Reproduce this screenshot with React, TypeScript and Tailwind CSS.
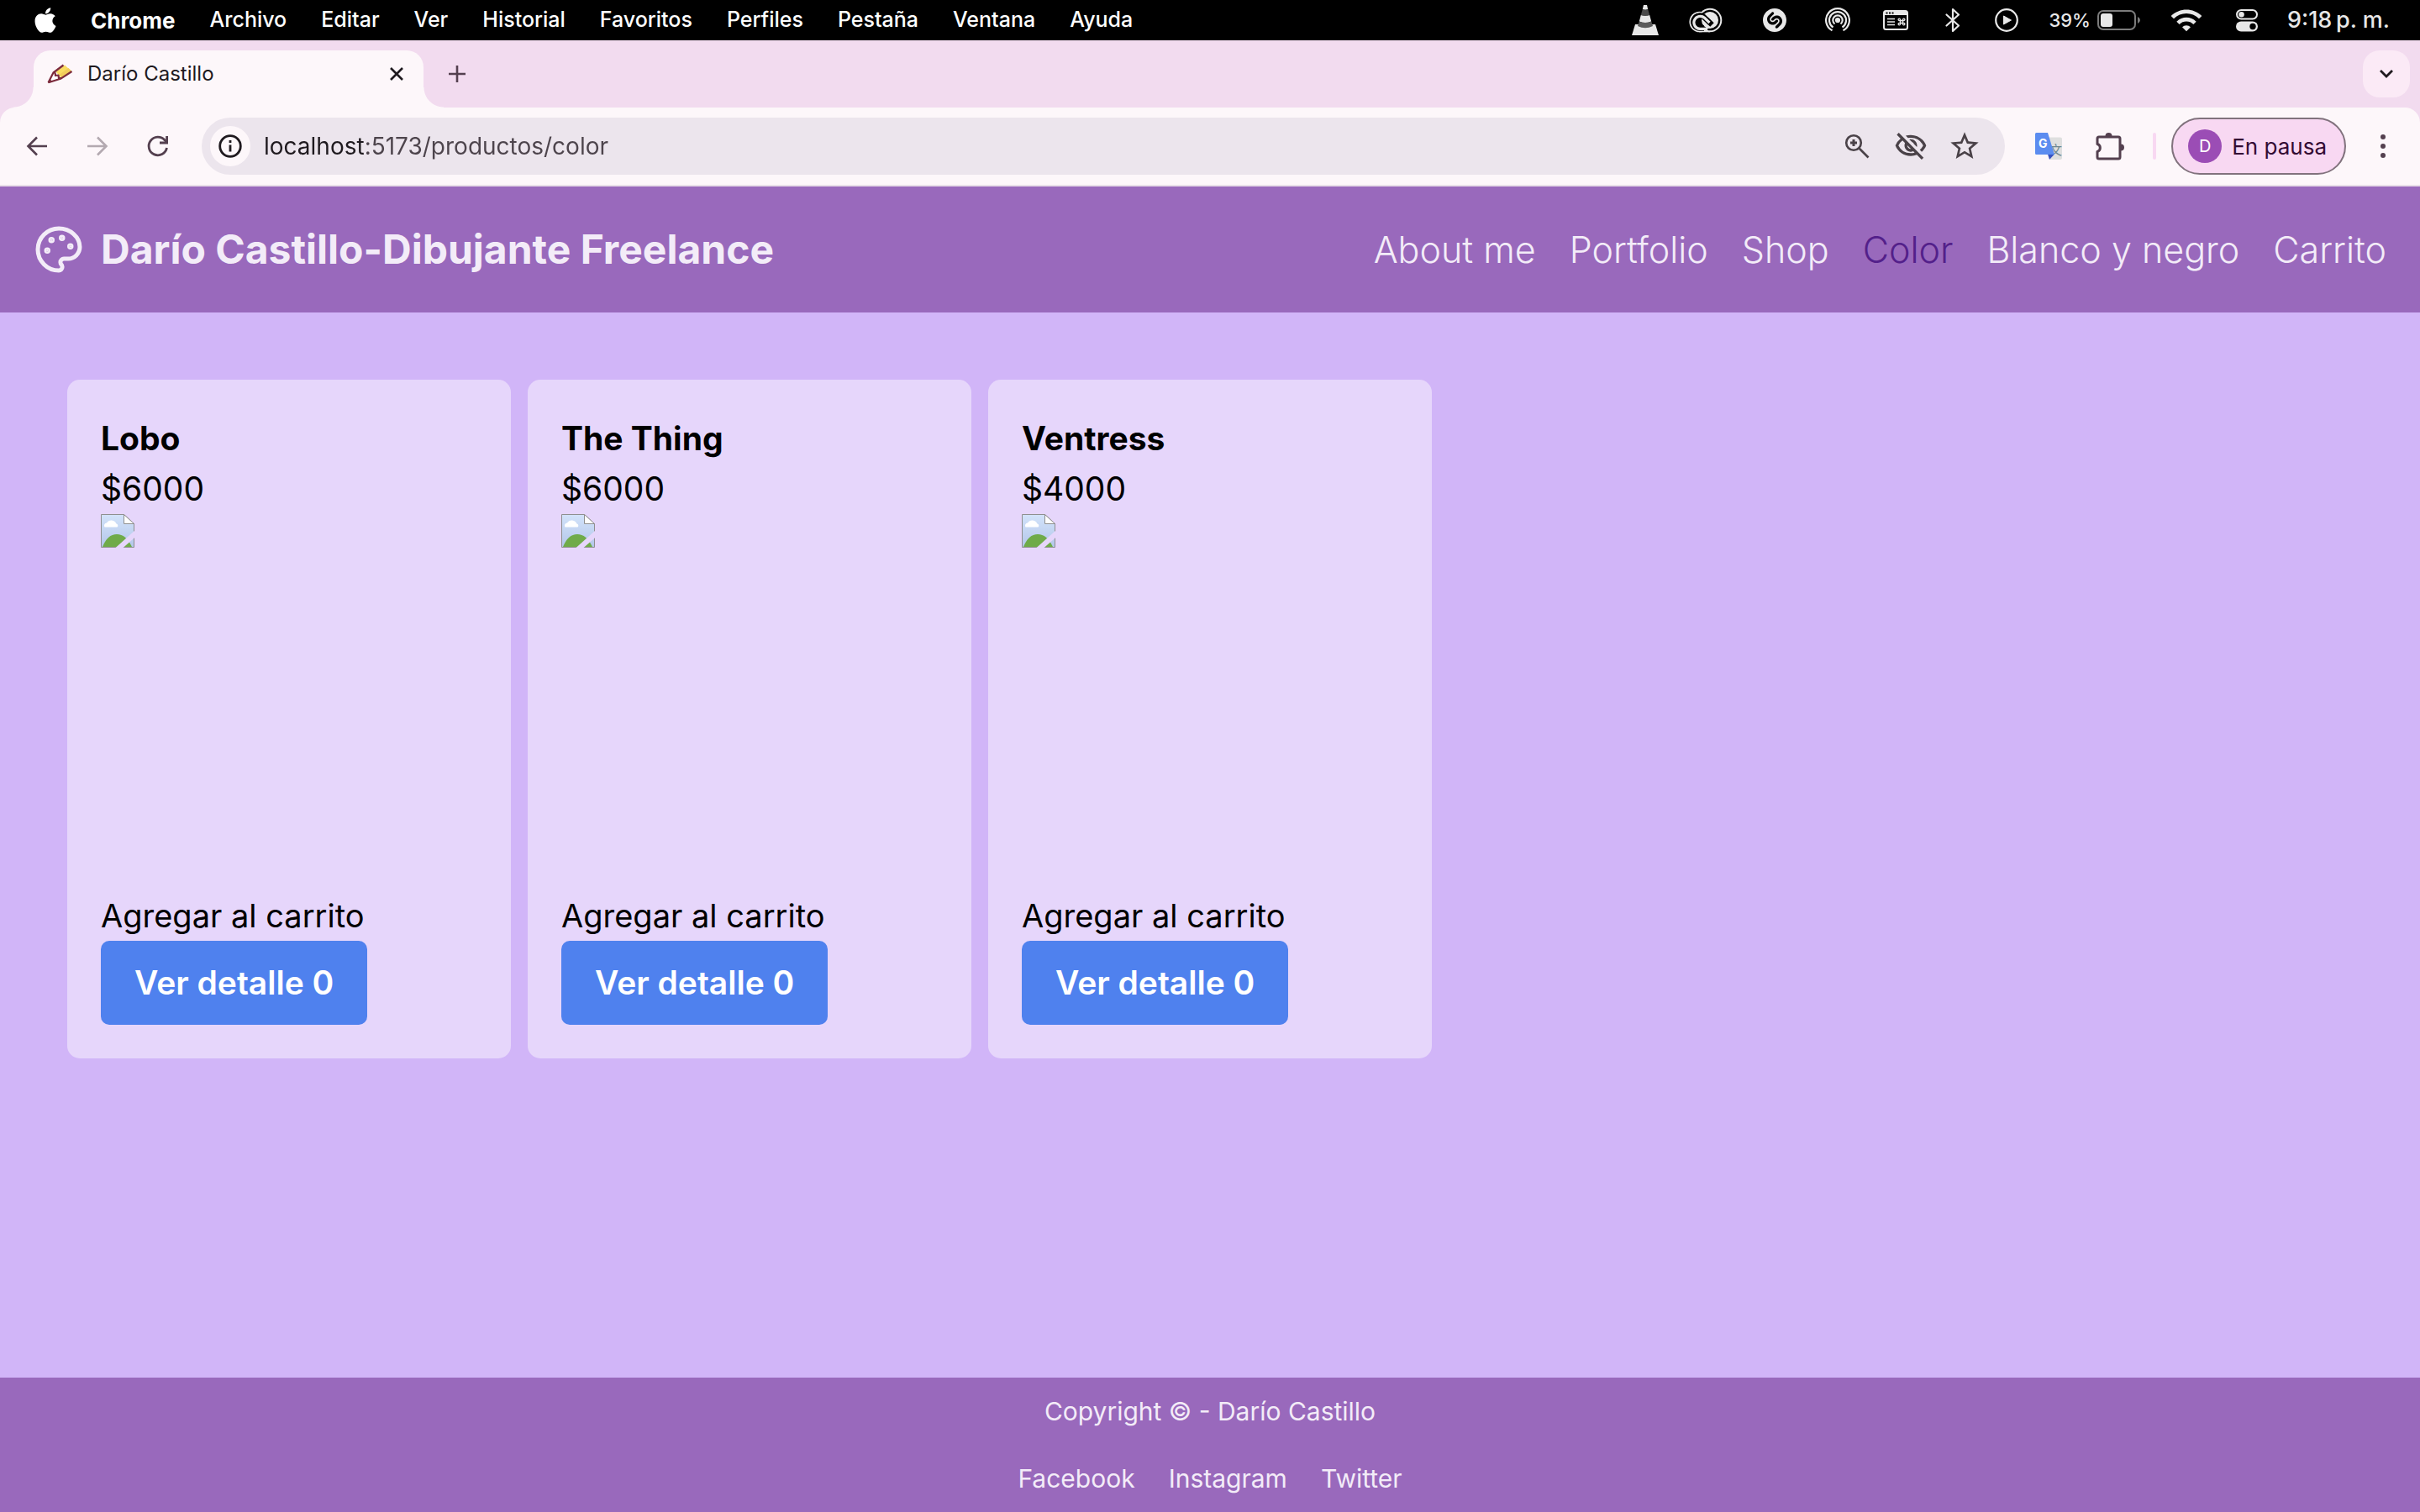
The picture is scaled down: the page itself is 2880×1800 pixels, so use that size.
import React from "react";
import { FaApple } from "react-icons/fa";
import { SiShazam } from "react-icons/si";
import { MdOutlineVisibilityOff, MdStarBorder, MdWifi } from "react-icons/md";

const menus = ["Archivo", "Editar", "Ver", "Historial", "Favoritos", "Perfiles", "Pestaña", "Ventana", "Ayuda"];

const navLinks = [
  { label: "About me", href: "#about" },
  { label: "Portfolio", href: "#portfolio" },
  { label: "Shop", href: "#shop" },
  { label: "Color", href: "#color", active: true },
  { label: "Blanco y negro", href: "#blanco-y-negro" },
  { label: "Carrito", href: "#carrito" },
];

const products = [
  { name: "Lobo", price: 6000 },
  { name: "The Thing", price: 6000 },
  { name: "Ventress", price: 4000 },
];

const socials = ["Facebook", "Instagram", "Twitter"];

function ConeIcon() {
  return (
    <svg viewBox="0 0 32 36" className="h-9 w-10" aria-hidden="true">
      <path d="M4 23h24l4 13H0z" fill="#e8e8e8" />
      <path d="M14 0h4l1.200 5q-3.200 1.500-6.400 0z" fill="#e8e8e8" />
      <path d="M12.800 5q3.200 1.500 6.400 0l2 7q-5.200 2-10.400 0z" fill="#4a4a4a" />
      <path d="M10.800 12q5.200 2 10.400 0l2 7.500q-7.200 3-14.400 0z" fill="#e8e8e8" />
      <path d="M8.800 19.500q7.200 3 14.400 0l1.800 5.500q-9 4.500-18 0z" fill="#5a5a5a" />
    </svg>
  );
}

function CloudRingsIcon() {
  return (
    <svg viewBox="0 0 40 30" className="h-[30px] w-11" aria-hidden="true">
      <circle cx="25" cy="15" r="14.300" fill="#e8e8e8" />
      <circle cx="12.700" cy="17" r="12.300" fill="#e8e8e8" />
      <path d="M12 22h13v7.300H12z" fill="#e8e8e8" />
      <circle cx="25" cy="15" r="12.300" fill="#000" />
      <circle cx="12.700" cy="17" r="10.300" fill="#000" />
      <circle cx="25" cy="15" r="10" fill="#e8e8e8" />
      <path d="M18 24.500h-5a7.500 7.500 0 1 1 5.500-12.500l9 8.500" fill="none" stroke="#000" strokeWidth="6.500" />
      <path d="M22 25.300h-9a7.500 7.500 0 1 1 5.500-13l6 5.700" fill="none" stroke="#e8e8e8" strokeWidth="3.200" />
      <path d="M17 18l6.500 6.500" fill="none" stroke="#e8e8e8" strokeWidth="3" />
    </svg>
  );
}

function BroadcastIcon() {
  return (
    <svg viewBox="0 0 30 30" className="size-[30px]" fill="none" stroke="#e8e8e8" strokeWidth="2.200" aria-hidden="true">
      <circle cx="15" cy="15" r="2" fill="#e8e8e8" />
      <path d="M11.500 19.500a5.700 5.700 0 1 1 7 0" />
      <path d="M9.500 23.500a10 10 0 1 1 11 0" />
      <path d="M8.500 27.300a13.900 13.900 0 1 1 13 0" />
    </svg>
  );
}

function ShortcutWindowIcon() {
  return (
    <svg viewBox="0 0 30 24" className="h-6 w-12" aria-hidden="true">
      <rect x="1" y="1" width="28" height="22" rx="2.500" fill="none" stroke="#e8e8e8" strokeWidth="2" />
      <path d="M1 1h28v5H1z" fill="#e8e8e8" />
      <path d="M3.500 3.500h2M7 3.500h2M10.500 3.500h2" stroke="#000" strokeWidth="2" />
      <path d="M5 10.500h9M5 14h9M5 17.500h9" stroke="#e8e8e8" strokeWidth="1.600" />
      <path
        d="M20.500 12.500h3v3h-3zM20.500 12.500h-1.300a1.200 1.200 0 1 1 1.300-1.300zM23.500 12.500v-1.300a1.200 1.200 0 1 1 1.300 1.300zM23.500 15.500h1.300a1.200 1.200 0 1 1-1.300 1.300zM20.500 15.500v1.300a1.200 1.200 0 1 1-1.300-1.300z"
        fill="none"
        stroke="#e8e8e8"
        strokeWidth="1.300"
      />
    </svg>
  );
}

function BluetoothIcon() {
  return (
    <svg viewBox="0 0 18 30" className="h-[30px] w-7" fill="none" stroke="#e8e8e8" strokeWidth="2.200" strokeLinejoin="round" aria-hidden="true">
      <path d="M1.500 8.500l14.500 13-7 6.500V2l7 6.500-14.500 13" strokeLinecap="round" />
    </svg>
  );
}

function PlayCircleIcon() {
  return (
    <svg viewBox="0 0 30 30" className="h-[30px] w-10" aria-hidden="true">
      <circle cx="15" cy="15" r="12.800" fill="none" stroke="#e8e8e8" strokeWidth="2.200" />
      <path d="M11.500 10v10l9-5z" fill="#e8e8e8" stroke="#e8e8e8" strokeLinejoin="round" />
    </svg>
  );
}

function BatteryIcon() {
  return (
    <svg viewBox="0 0 52 24" className="h-6 w-[52px]" aria-hidden="true">
      <rect x="1" y="1" width="44" height="22" rx="6" fill="none" stroke="#7c7c7c" strokeWidth="2" />
      <rect x="4" y="4" width="14" height="16" rx="3" fill="#e8e8e8" />
      <path d="M48 8q3 1.500 3 4t-3 4z" fill="#7c7c7c" />
    </svg>
  );
}

function ControlCenterIcon() {
  return (
    <svg viewBox="0 0 28 28" className="h-7 w-9" aria-hidden="true">
      <rect x="2" y="2" width="24" height="10.500" rx="5.250" fill="none" stroke="#e8e8e8" strokeWidth="2" />
      <circle cx="7.500" cy="7.200" r="3.300" fill="#e8e8e8" />
      <rect x="1" y="15.500" width="26" height="12" rx="6" fill="#e8e8e8" />
      <circle cx="21" cy="21.500" r="3.700" fill="#000" />
    </svg>
  );
}

function MenuBar() {
  return (
    <header className="flex h-12 items-center justify-between bg-black pr-9 pl-9 text-[25px] font-medium text-white">
      <nav className="flex items-center" aria-label="Barra de menús">
        <button type="button" aria-label="Apple" className="mr-9 grid w-9 place-items-center">
          <FaApple className="size-[34px]" />
        </button>
        <div className="flex items-center gap-[41px]">
          <button type="button" className="text-[26px] font-bold">Chrome</button>
          {menus.map((menu) => (
            <button type="button" key={menu}>{menu}</button>
          ))}
        </div>
      </nav>
      <div className="flex items-center gap-[30px] text-[#e8e8e8]">
        <ConeIcon />
        <CloudRingsIcon />
        <SiShazam className="h-7 w-[60px]" />
        <BroadcastIcon />
        <ShortcutWindowIcon />
        <BluetoothIcon />
        <PlayCircleIcon />
        <div className="flex items-center gap-2">
          <span className="text-[22px]">39%</span>
          <BatteryIcon />
        </div>
        <MdWifi className="h-10 w-12" />
        <ControlCenterIcon />
        <time className="text-[27px]">{"9:18\u2009p. m."}</time>
      </div>
    </header>
  );
}

function PencilIcon() {
  return (
    <svg viewBox="0 0 32 24" className="h-6 w-8" aria-hidden="true">
      <path d="M1 22.500L7.500 10 11 9l6 7.500-1.500 2z" fill="#fff" />
      <path d="M10.500 9.500L21 1.500l8.500 7.500L17 17z" fill="#f9dc62" />
      <path d="M15 12.500l10.500-7.500 4 4L17 17z" fill="#f2cc5a" />
      <path d="M1.500 22.300L7.500 10.500 19.500 1.500M1.500 22.300l14.500-4.500L29.500 9M9.500 10.500l.5 3.500 3.500-.5.500 3.500 2.500 0" fill="none" stroke="#7c2b3c" strokeWidth="2.200" strokeLinejoin="round" />
      <path d="M1 23l2.500-5 3 3.500z" fill="#7c2b3c" />
    </svg>
  );
}

function TabStrip() {
  return (
    <div className="flex h-20 items-end justify-between pr-3 pl-10">
      <div className="flex items-end">
        <div className="relative flex h-[68px] w-[464px] items-center rounded-t-[20px] bg-[#fdf7fa] px-4 pb-3">
          <span className="absolute bottom-0 -left-6 size-6 bg-[radial-gradient(circle_at_0_0,transparent_23px,#fdf7fa_24px)]" />
          <span className="absolute -right-6 bottom-0 size-6 bg-[radial-gradient(circle_at_100%_0,transparent_23px,#fdf7fa_24px)]" />
          <PencilIcon />
          <span className="ml-4 flex-1 text-2xl text-[#1f1a1f]">Darío Castillo</span>
          <button type="button" aria-label="Cerrar pestaña" className="grid size-8 place-items-center">
            <svg viewBox="0 0 16 16" className="size-4" stroke="#1f1a1f" strokeWidth="2.600" aria-hidden="true">
              <path d="M1 1l14 14M15 1L1 15" />
            </svg>
          </button>
        </div>
        <button type="button" aria-label="Nueva pestaña" className="mb-3 ml-3 grid size-14 place-items-center">
          <svg viewBox="0 0 20 20" className="size-5" stroke="#54404f" strokeWidth="2.600" aria-hidden="true">
            <path d="M10 0v20M0 10h20" />
          </svg>
        </button>
      </div>
      <button type="button" aria-label="Buscar pestañas" className="mb-3 grid size-14 place-items-center rounded-[20px] bg-[#fbeaf6]">
        <svg viewBox="0 0 16 10" className="h-[10px] w-4" fill="none" stroke="#1f1a1f" strokeWidth="2.800" aria-hidden="true">
          <path d="M1 1l7 7 7-7" />
        </svg>
      </button>
    </div>
  );
}

function ArrowIcon({ flipped = false }: { flipped?: boolean }) {
  return (
    <svg viewBox="0 0 32 32" className="size-8" fill="none" stroke="currentColor" strokeWidth="2.600" aria-hidden="true">
      {flipped ? <path d="M4 16h22M16 5.500L26.500 16 16 26.500" /> : <path d="M28 16H6M16 5.500L5.500 16 16 26.500" />}
    </svg>
  );
}

function TranslateIcon() {
  return (
    <svg viewBox="0 0 32 32" className="size-8" aria-hidden="true">
      <path d="M13 5.500h17a2 2 0 0 1 2 2V30a2 2 0 0 1-2 2H18z" fill="#dfdfdf" />
      <text x="17" y="26" fontSize="15" fill="#6f8790" fontFamily="Noto Sans CJK SC, sans-serif">文</text>
      <path d="M17 32l6-6.500h-8z" fill="#3a53c0" />
      <path d="M1.500 0H15l8 26H1.500A1.500 1.500 0 0 1 0 24.500v-23A1.500 1.500 0 0 1 1.500 0z" fill="#5b8cf0" />
      <text x="4" y="18" fontSize="14" fontWeight="700" fill="#fff" fontFamily="Inter, sans-serif">G</text>
    </svg>
  );
}

function PuzzleIcon() {
  return (
    <svg viewBox="0 0 34 34" className="size-[34px]" aria-hidden="true">
      <path
        d="M4 6h23a2 2 0 0 1 2 2v22a2 2 0 0 1-2 2H4a2 2 0 0 1-2-2v-6.500a4.700 4.700 0 0 0 0-9V8a2 2 0 0 1 2-2z"
        fill="none"
        stroke="#54404f"
        strokeWidth="3"
        strokeLinejoin="round"
      />
      <path d="M11.500 5a4 4 0 0 1 8 0zM30 14.500a4 4 0 0 1 0 8z" fill="#54404f" />
    </svg>
  );
}

function Toolbar() {
  return (
    <div className="flex h-[94px] items-center rounded-t-[18px] border-b-2 border-[#e9dfe9] bg-[#fdf7fa] pr-7 pl-7 text-[#54404f]">
      <div className="mr-9 flex gap-10">
        <button type="button" aria-label="Atrás"><ArrowIcon /></button>
        <button type="button" aria-label="Adelante" className="text-[#b3a9b0]"><ArrowIcon flipped /></button>
        <button type="button" aria-label="Recargar">
          <svg viewBox="0 0 32 32" className="size-8" fill="none" stroke="currentColor" strokeWidth="2.800" aria-hidden="true">
            <path d="M26.500 18A10.800 10.800 0 1 1 24 8.800l3 3" />
            <path d="M18 12h8.600V4" />
          </svg>
        </button>
      </div>
      <div className="flex h-[68px] flex-1 items-center gap-8 rounded-full bg-[#ece5ed] pr-8 pl-2.5 text-[#4a4248]">
        <button type="button" aria-label="Información del sitio" className="-mr-4 grid size-12 place-items-center rounded-full bg-[#fdf7fa]">
          <svg viewBox="0 0 28 28" className="size-7" fill="none" stroke="#1f1a1f" strokeWidth="2.800" aria-hidden="true">
            <circle cx="14" cy="14" r="12.300" />
            <path d="M14 12.500v8M14 7v3" />
          </svg>
        </button>
        <input
          type="text"
          aria-label="Dirección"
          defaultValue="localhost:5173/productos/color"
          className="min-w-0 flex-1 bg-linear-to-r from-[#1f1a1f] from-[120px] to-[#4d444c] to-[120px] bg-clip-text text-[28px] text-transparent outline-none"
        />
        <button type="button" aria-label="Zoom">
          <svg viewBox="0 0 32 32" className="size-8" fill="none" stroke="currentColor" strokeWidth="2.600" aria-hidden="true">
            <circle cx="12" cy="12" r="8.800" />
            <path d="M18.500 18.500l11 11" />
            <path d="M12 8v8M8 12h8" strokeWidth="3" />
          </svg>
        </button>
        <button type="button" aria-label="Cookies bloqueadas" className="-mx-1"><MdOutlineVisibilityOff className="size-10" /></button>
        <button type="button" aria-label="Añadir a favoritos" className="-mx-1"><MdStarBorder className="size-10" /></button>
      </div>
      <button type="button" aria-label="Traductor" className="ml-9"><TranslateIcon /></button>
      <button type="button" aria-label="Extensiones" className="ml-10"><PuzzleIcon /></button>
      <span className="ml-[34px] h-8 w-1 rounded-full bg-[#f8d8f2]" />
      <button type="button" className="ml-[18px] flex h-[68px] items-center gap-3 rounded-full border-2 border-[#81727d] bg-[#f8d8f2] pr-[21px] pl-[18px] text-[26px] text-[#330b33]">
        <span className="grid size-10 place-items-center rounded-full bg-[#9b4db5] text-xl text-white">D</span>
        En pausa
      </button>
      <button type="button" aria-label="Menú" className="ml-7 grid size-8 place-items-center">
        <svg viewBox="0 0 8 28" className="h-7 w-2" fill="currentColor" aria-hidden="true">
          <circle cx="4" cy="3" r="3" />
          <circle cx="4" cy="14" r="3" />
          <circle cx="4" cy="25" r="3" />
        </svg>
      </button>
    </div>
  );
}

function PaletteIcon() {
  return (
    <svg viewBox="0 0 24 24" className="size-[60px]" fill="none" stroke="currentColor" strokeWidth="2" strokeLinecap="round" strokeLinejoin="round" aria-hidden="true">
      <circle cx="13.500" cy="6.500" r=".5" fill="currentColor" />
      <circle cx="17.500" cy="10.500" r=".5" fill="currentColor" />
      <circle cx="8.500" cy="7.500" r=".5" fill="currentColor" />
      <circle cx="6.500" cy="12.500" r=".5" fill="currentColor" />
      <path d="M12 2C6.500 2 2 6.500 2 12s4.500 10 10 10c.926 0 1.648-.746 1.648-1.688 0-.437-.18-.835-.437-1.125-.29-.289-.438-.652-.438-1.125a1.640 1.640 0 0 1 1.668-1.668h1.996c3.051 0 5.555-2.503 5.555-5.554C21.965 6.012 17.461 2 12 2z" />
    </svg>
  );
}

function SiteHeader() {
  return (
    <header className="flex h-[150px] items-center justify-between bg-[#9969bc] px-10 text-[#f3ecf8]">
      <a href="#inicio" className="flex items-center gap-5 text-5xl font-bold">
        <PaletteIcon />
        <h1>Darío Castillo-Dibujante Freelance</h1>
      </a>
      <nav className="flex gap-10 text-[43px] font-[350]">
        {navLinks.map((link) => (
          <a key={link.label} href={link.href} className={link.active ? "text-[#53208a]" : undefined}>
            {link.label}
          </a>
        ))}
      </nav>
    </header>
  );
}

function MissingImage() {
  return (
    <svg viewBox="0 0 40 40" className="size-10" aria-hidden="true">
      <defs>
        <linearGradient id="sky" x1="0" y1="0" x2="0" y2="1">
          <stop offset="0" stopColor="#d3e3fa" />
          <stop offset="1" stopColor="#b3c6ea" />
        </linearGradient>
      </defs>
      <path d="M.5 .5h27l12 11v28H.5z" fill="url(#sky)" stroke="#8f8f8f" />
      <path d="M4.500 15.500a3.200 3.200 0 0 1 2.500-5 6.500 6.500 0 0 1 11.500 1 2.300 2.300 0 0 1 1 4z" fill="#fff" />
      <path d="M2 39q6-15 17-15t18 15z" fill="#6fab49" />
      <path d="M27.500 .5l12 11h-12z" fill="#fff" stroke="#8f8f8f" />
      <path d="M17 40.500L41 19v8.500L26 40.500z" fill="#e6d6fb" />
    </svg>
  );
}

function ProductCard({ name, price }: { name: string; price: number }) {
  return (
    <article className="flex flex-col items-start rounded-[15px] bg-[#e6d6fb] p-10 text-[39px] leading-[60px] text-black">
      <h2 className="font-bold">{name}</h2>
      <p>${price}</p>
      <div className="aspect-square w-full">
        <MissingImage />
      </div>
      <p className="text-[38px]">Agregar al carrito</p>
      <button type="button" className="rounded-[10px] bg-[#4f81ee] px-10 py-5 font-semibold text-white">
        Ver detalle 0
      </button>
    </article>
  );
}

export default function App() {
  return (
    <div className="flex min-h-screen flex-col bg-[#d1b5f8] font-['Inter',sans-serif]">
      <MenuBar />
      <div className="bg-[#f2dbef]">
        <TabStrip />
        <Toolbar />
      </div>
      <SiteHeader />
      <main className="grid flex-1 grid-cols-5 content-start gap-5 p-20">
        {products.map((product) => (
          <ProductCard key={product.name} {...product} />
        ))}
      </main>
      <footer className="flex flex-col items-center gap-10 bg-[#9969bc] py-5 text-[30px] leading-10 text-[#f3ecf8]">
        <p>Copyright © - Darío Castillo</p>
        <nav className="flex gap-10" aria-label="Redes sociales">
          {socials.map((social) => (
            <a key={social} href={`#${social.toLowerCase()}`}>{social}</a>
          ))}
        </nav>
      </footer>
    </div>
  );
}
